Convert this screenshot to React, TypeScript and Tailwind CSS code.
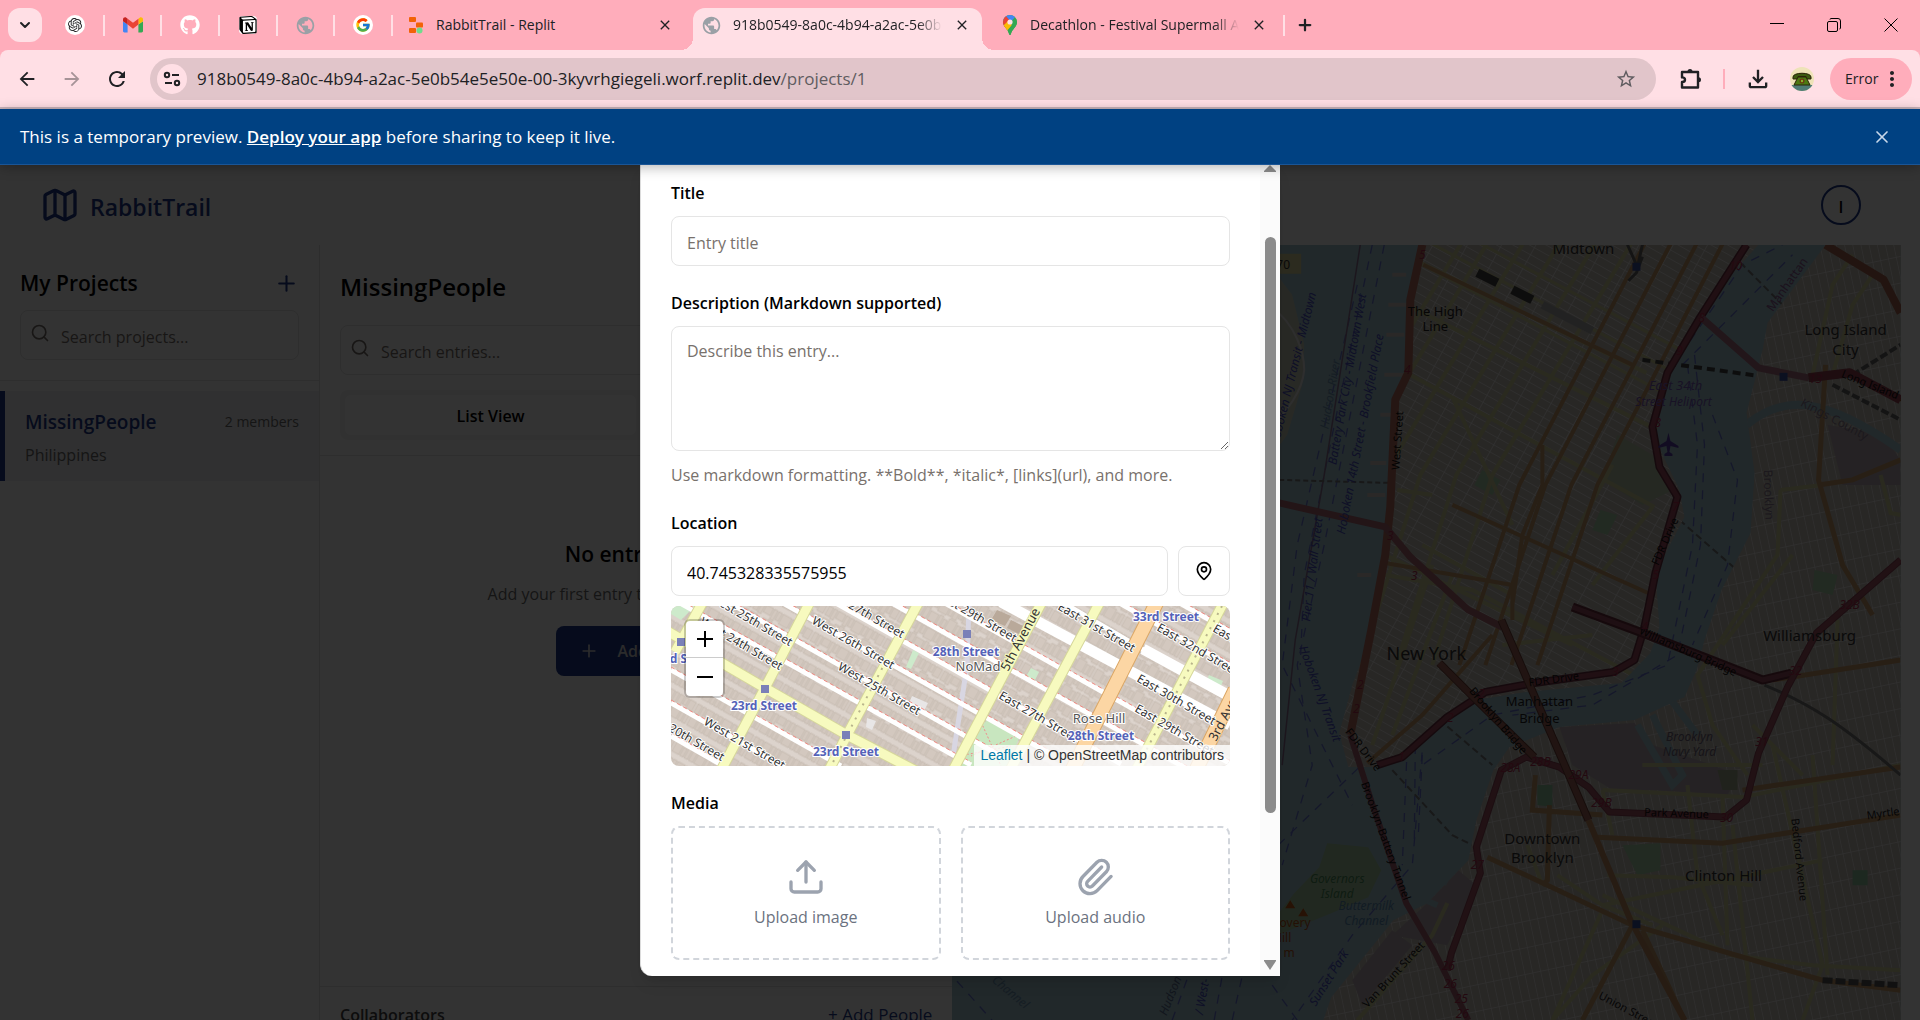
import React from "react";
import { ChevronDown, Map as MapIcon, MapPin, Paperclip, Plus, Search, Upload, X } from "lucide-react";
import {
  MdArrowBack,
  MdArrowForward,
  MdClose,
  MdMoreVert,
  MdOutlineFileDownload,
  MdPublic,
  MdRefresh,
  MdStarBorder,
} from "react-icons/md";
import { FaGithub } from "react-icons/fa";
import { FcGoogle } from "react-icons/fc";
import { SiNotion, SiOpenai } from "react-icons/si";

/* ---------- small brand drawings ---------- */

function GmailLogo() {
  return (
    <svg viewBox="0 0 20 16" className="h-4 w-5" aria-hidden="true">
      <path d="M1.4 15.5h3.2V7.6L0 4.2v9.9c0 .8.6 1.4 1.4 1.4z" fill="#4285f4" />
      <path d="M15.4 15.5h3.2c.8 0 1.4-.6 1.4-1.4V4.2l-4.6 3.4z" fill="#34a853" />
      <path d="M15.4 1.7v5.9L20 4.2V2.4c0-1.7-1.9-2.7-3.3-1.7z" fill="#fbbc04" />
      <path d="M4.6 7.6V1.7L10 5.8l5.4-4.1v5.9L10 11.7z" fill="#ea4335" />
      <path d="M0 2.4v1.8l4.6 3.4V1.7L3.3.7C1.9-.3 0 .7 0 2.4z" fill="#c5221f" />
    </svg>
  );
}

function ReplitLogo() {
  return (
    <svg viewBox="0 0 16 18" className="h-[18px] w-4 shrink-0" aria-hidden="true">
      <rect x="1" y="1" width="7" height="5" rx="1" fill="#f26207" />
      <rect x="8" y="6.500" width="7" height="5" rx="1" fill="#f26207" />
      <rect x="1" y="12" width="7" height="5" rx="1" fill="#f26207" />
      <circle cx="11.500" cy="14.500" r="3" fill="#6fdc8c" />
    </svg>
  );
}

function MapsLogo() {
  return (
    <svg viewBox="0 0 16 22" className="h-[22px] w-4 shrink-0" aria-hidden="true">
      <defs>
        <clipPath id="pin">
          <path d="M8 1a7 7 0 0 0-7 7c0 5 5 7 6.200 12.300.2.900 1.400.9 1.600 0C10 15 15 13 15 8a7 7 0 0 0-7-7z" />
        </clipPath>
      </defs>
      <g clipPath="url(#pin)">
        <rect width="16" height="22" fill="#34a853" />
        <path d="M0 6l8 3 5-6V0H0z" fill="#4285f4" />
        <path d="M0 4l4-2 5 6-6 6H0z" fill="#ea4335" />
        <path d="M0 13l6-6 4 4-6 7H0z" fill="#fbbc04" />
        <path d="M16 3l-6 8-5 7 2 4h9z" fill="#34a853" />
      </g>
      <circle cx="8" cy="8" r="2.600" fill="#ffdfe5" />
    </svg>
  );
}

function SiteInfoIcon() {
  return (
    <svg viewBox="0 0 18 16" className="h-4 w-[18px]" fill="none" stroke="#202124" strokeWidth="2" aria-hidden="true">
      <circle cx="4" cy="4" r="2.200" />
      <path d="M9 4h7M2 12h7" />
      <circle cx="14" cy="12" r="2.200" />
    </svg>
  );
}

function PuzzleIcon() {
  return (
    <svg viewBox="0 0 24 24" className="size-6" aria-hidden="true">
      <path
        d="M3 5h16v15.500H3v-5.500c1.800 0 3-.9 3-2.300S4.800 10.400 3 10.400z"
        fill="none"
        stroke="#202124"
        strokeWidth="2.400"
        strokeLinejoin="round"
      />
      <path d="M8.500 4.500a2.500 2.500 0 0 1 5 0zM19.500 10.200a2.500 2.500 0 0 1 0 5z" fill="#202124" />
    </svg>
  );
}

function ProfilePicture() {
  return (
    <svg viewBox="0 0 24 24" className="size-6" aria-hidden="true">
      <defs>
        <clipPath id="face">
          <circle cx="12" cy="12" r="12" />
        </clipPath>
      </defs>
      <g clipPath="url(#face)">
        <rect width="24" height="24" fill="#eee3b8" />
        <rect y="18" width="24" height="6" fill="#4f7c74" />
        <path d="M3 10c0-5 18-5 18 0v2h-5V9.500H8V12H3z" fill="#3c5a10" stroke="#2a2408" />
        <path d="M8 10h8l4 8H4z" fill="#4d7a12" stroke="#2a2408" />
        <circle cx="12" cy="14" r="2.500" fill="#6b3a12" />
        <circle cx="12" cy="14" r="1.200" fill="#8ab52c" />
      </g>
    </svg>
  );
}

/* ---------- browser chrome ---------- */

function TabStrip() {
  return (
    <header className="flex h-[50px] w-full shrink-0 items-center bg-[#ffadbb] text-[#202124]">
      <button aria-label="Search tabs" className="ml-2 flex size-[34px] shrink-0 items-center justify-center rounded-xl bg-[#ffdfe5]">
        <ChevronDown className="size-4" strokeWidth={3} />
      </button>
      <nav aria-label="Pinned tabs" className="ml-[5px] flex w-[346px] shrink-0 items-center">
        <button aria-label="ChatGPT" className="flex h-[21px] flex-1 items-center justify-center border-r-2 border-[#ffdfe5]">
          <span className="flex size-5 items-center justify-center rounded-full bg-white">
            <SiOpenai className="size-3.5" />
          </span>
        </button>
        <button aria-label="Gmail" className="flex h-[21px] flex-1 items-center justify-center border-r-2 border-[#ffdfe5]">
          <GmailLogo />
        </button>
        <button aria-label="GitHub" className="flex h-[21px] flex-1 items-center justify-center border-r-2 border-[#ffdfe5] text-white">
          <FaGithub className="size-5" />
        </button>
        <button aria-label="Notion" className="flex h-[21px] flex-1 items-center justify-center border-r-2 border-[#ffdfe5]">
          <span className="rounded bg-white">
            <SiNotion className="size-[18px] text-black" />
          </span>
        </button>
        <button aria-label="Preview" className="flex h-[21px] flex-1 items-center justify-center border-r-2 border-[#ffdfe5] text-[#9aa0a6]">
          <MdPublic className="size-[21px]" />
        </button>
        <button aria-label="Google" className="flex h-[21px] flex-1 items-center justify-center border-r-2 border-[#ffdfe5]">
          <span className="flex size-5 items-center justify-center rounded-full bg-white">
            <FcGoogle className="size-4" />
          </span>
        </button>
      </nav>
      <div className="flex w-[300px] shrink-0 items-center pl-[15px] pr-5">
        <ReplitLogo />
        <a href="#replit" className="ml-3 flex-1 overflow-hidden text-sm whitespace-nowrap">RabbitTrail - Replit</a>
        <button aria-label="Close tab"><MdClose className="size-4" /></button>
      </div>
      <div className="relative flex h-[42px] w-[289px] shrink-0 items-center self-end rounded-t-xl bg-[#ffdfe5] pr-3 pb-2 pl-2">
        <span className="absolute bottom-0 -left-3 size-3 bg-[radial-gradient(circle_at_0_0,#ffadbb_12px,#ffdfe5_12px)]" />
        <span className="absolute -right-3 bottom-0 size-3 bg-[radial-gradient(circle_at_100%_0,#ffadbb_12px,#ffdfe5_12px)]" />
        <MdPublic className="size-[21px] shrink-0 text-[#9aa0a6]" />
        <a href="#preview" className="ml-[11px] w-[209px] overflow-hidden text-sm whitespace-nowrap [mask-image:linear-gradient(to_right,black_88%,transparent)]">
          918b0549-8a0c-4b94-a2ac-5e0b54e5e50e
        </a>
        <button aria-label="Close tab" className="ml-auto"><MdClose className="size-4" /></button>
      </div>
      <div className="flex w-[303px] shrink-0 items-center border-[#ffdfe5] pl-5">
        <MapsLogo />
        <a href="#maps" className="ml-3 w-[209px] overflow-hidden text-sm whitespace-nowrap [mask-image:linear-gradient(to_right,black_88%,transparent)]">
          Decathlon - Festival Supermall Alabang
        </a>
        <button aria-label="Close tab" className="ml-auto"><MdClose className="size-4" /></button>
        <span className="ml-4 h-[21px] w-0.5 bg-[#ffdfe5]" />
      </div>
      <button aria-label="New tab" className="ml-[11px]"><Plus className="size-[18px]" strokeWidth={3} /></button>
      <div className="ml-auto flex items-center gap-[43px] pr-[22px]">
        <button aria-label="Minimize">
          <svg viewBox="0 0 14 14" className="size-3.5" stroke="black"><path d="M0 5.500h14" /></svg>
        </button>
        <button aria-label="Restore">
          <svg viewBox="0 0 14 14" className="size-3.5" fill="none" stroke="black">
            <rect x="0.500" y="3.500" width="10" height="10" rx="1.500" />
            <path d="M3 1.500c0-.6.4-1 1-1h7a2.500 2.500 0 0 1 2.500 2.500v7c0 .6-.4 1-1 1" />
          </svg>
        </button>
        <button aria-label="Close window">
          <svg viewBox="0 0 14 14" className="size-3.5" stroke="black"><path d="M.5.5l13 13M13.500.5l-13 13" /></svg>
        </button>
      </div>
    </header>
  );
}

function Toolbar() {
  return (
    <div className="shrink-0 bg-[#ffadbb]">
      <div className="flex h-[59px] items-center rounded-t-lg border-b-2 border-[#c9b3ba] bg-[#ffdfe5] text-[#202124]">
        <button aria-label="Back" className="ml-4"><MdArrowBack className="size-[22px]" /></button>
        <button aria-label="Forward" className="ml-[23px] text-[#202124]/40"><MdArrowForward className="size-[22px]" /></button>
        <button aria-label="Reload" className="ml-[22px]"><MdRefresh className="size-6" /></button>
        <div className="ml-[21px] flex h-[42px] flex-1 items-center rounded-full bg-[#e1c5ca] pr-[19px] pl-[7px]">
          <button aria-label="Site information" className="flex size-[30px] items-center justify-center rounded-full bg-[#ffdfe5]">
            <SiteInfoIcon />
          </button>
          <p className="ml-[10px] flex-1 text-[17px] whitespace-nowrap">
            918b0549-8a0c-4b94-a2ac-5e0b54e5e50e-00-3kyvrhgiegeli.worf.replit.dev<span className="text-[#5f5c60]">/projects/1</span>
          </p>
          <button aria-label="Bookmark" className="text-[#5f5c60]"><MdStarBorder className="size-[22px]" /></button>
        </div>
        <button aria-label="Extensions" className="ml-[23px]"><PuzzleIcon /></button>
        <span className="ml-5 h-5 w-0.5 bg-[#ffadbb]" />
        <button aria-label="Downloads" className="ml-[19px]"><MdOutlineFileDownload className="size-7" /></button>
        <button aria-label="Profile" className="ml-[18px]"><ProfilePicture /></button>
        <button className="mr-2 ml-4 flex h-[42px] w-[82px] items-center rounded-full bg-[#ffadbb] pl-[15px] text-sm">
          Error
          <MdMoreVert className="ml-[2px] size-6" />
        </button>
      </div>
    </div>
  );
}

function PreviewBanner() {
  return (
    <div className="relative z-10 flex h-14 shrink-0 items-center border-b border-[#1a5596] bg-[#004182] px-5 text-[17px] text-white shadow-[0_2px_12px_rgba(0,0,0,0.3)]">
      <p>
        This is a temporary preview.{" "}
        <a href="#deploy" className="font-semibold underline">Deploy your app</a> before sharing to keep it live.
      </p>
      <button aria-label="Dismiss" className="mr-2 ml-auto text-[#c8d8ea]"><X className="size-5" /></button>
    </div>
  );
}

/* ---------- city map behind the dialog ---------- */

type Label = { x: number; y: number; t: string; s: number; f: string; r?: number; i?: boolean };

const CITY_LABELS: Label[] = [
  { x: 631, y: 9, t: "Midtown", s: 15, f: "#333" },
  { x: 483, y: 71, t: "The High", s: 13, f: "#222" },
  { x: 483, y: 86, t: "Line", s: 13, f: "#222" },
  { x: 893, y: 90, t: "Long Island", s: 15, f: "#333" },
  { x: 893, y: 110, t: "City", s: 15, f: "#333" },
  { x: 723, y: 145, t: "East 34th", s: 13, f: "#7a5cb8", i: true },
  { x: 721, y: 161, t: "Street Heliport", s: 12, f: "#7a5cb8", i: true },
  { x: 474, y: 415, t: "New York", s: 18, f: "#333" },
  { x: 587, y: 461, t: "Manhattan", s: 13, f: "#222" },
  { x: 587, y: 478, t: "Bridge", s: 13, f: "#222" },
  { x: 857, y: 396, t: "Williamsburg", s: 15, f: "#333" },
  { x: 737, y: 496, t: "Brooklyn", s: 12, f: "#6f6478", i: true },
  { x: 737, y: 511, t: "Navy Yard", s: 12, f: "#6f6478", i: true },
  { x: 590, y: 599, t: "Downtown", s: 15, f: "#333" },
  { x: 590, y: 618, t: "Brooklyn", s: 15, f: "#333" },
  { x: 771, y: 636, t: "Clinton Hill", s: 15, f: "#333" },
  { x: 385, y: 638, t: "Governors", s: 12, f: "#4a8a5a", i: true },
  { x: 385, y: 653, t: "Island", s: 12, f: "#4a8a5a", i: true },
  { x: 414, y: 665, t: "Buttermilk", s: 12, f: "#5a8ab0", i: true },
  { x: 414, y: 680, t: "Channel", s: 12, f: "#5a8ab0", i: true },
  { x: 340, y: 682, t: "covery", s: 12, f: "#b4541a" },
  { x: 330, y: 697, t: "Hill", s: 12, f: "#b4541a" },
  { x: 332, y: 712, t: "2 m", s: 12, f: "#b4541a" },
  { x: 449, y: 196, t: "West Street", s: 11, f: "#111", r: -86 },
  { x: 345, y: 125, t: "Hoboken NJ Transit - Midtown", s: 12, f: "#4a50c0", r: -76, i: true },
  { x: 382, y: 150, t: "Hudson River", s: 12, f: "#6d93b0", r: -80, i: true },
  { x: 399, y: 135, t: "Battery Park City - Midtown West", s: 12, f: "#4a50c0", r: -80, i: true },
  { x: 412, y: 190, t: "Hoboken 14th Street - Brookfield Place", s: 12, f: "#4a50c0", r: -79, i: true },
  { x: 364, y: 325, t: "Pier 11 / Wall Street", s: 12, f: "#4a50c0", r: -83, i: true },
  { x: 364, y: 450, t: "Hoboken NJ Transit", s: 12, f: "#4a50c0", r: 70, i: true },
  { x: 838, y: 42, t: "Manhattan", s: 12, f: "#8a5a90", r: -55 },
  { x: 812, y: 250, t: "Brooklyn", s: 12, f: "#8a7a90", r: 88 },
  { x: 880, y: 178, t: "Kings County", s: 12, f: "#8a7a90", r: 28 },
  { x: 923, y: 146, t: "Long Island Ex", s: 11, f: "#111", r: 22 },
  { x: 716, y: 298, t: "FDR Drive", s: 11, f: "#111", r: -66 },
  { x: 602, y: 438, t: "FDR Drive", s: 11, f: "#111", r: -8 },
  { x: 408, y: 507, t: "FDR Drive", s: 11, f: "#111", r: 52 },
  { x: 734, y: 410, t: "Williamsburg Bridge", s: 11, f: "#111", r: 24 },
  { x: 543, y: 478, t: "Brooklyn Bridge", s: 11, f: "#111", r: 50 },
  { x: 430, y: 597, t: "Brooklyn-Battery Tunnel", s: 11, f: "#111", r: 70 },
  { x: 724, y: 572, t: "Park Avenue", s: 11, f: "#111", r: 2 },
  { x: 931, y: 572, t: "Myrtle", s: 11, f: "#222", r: -8 },
  { x: 843, y: 615, t: "Bedford Avenue", s: 11, f: "#222", r: 84 },
  { x: 444, y: 732, t: "Van Brunt Street", s: 11, f: "#222", r: -47 },
  { x: 674, y: 768, t: "Union Street", s: 11, f: "#222", r: 28 },
  { x: 380, y: 735, t: "Sunset Park", s: 12, f: "#4a50c0", r: -58, i: true },
  { x: 222, y: 752, t: "Hudson", s: 12, f: "#5a6f90", r: -68, i: true },
  { x: 254, y: 752, t: "/ West-", s: 12, f: "#4a50c0", r: -80, i: true },
  { x: 56, y: 750, t: "Channel", s: 12, f: "#6d93b0", r: 40, i: true },
  { x: 331, y: 24, t: "70", s: 12, f: "#333" },
  { x: 470, y: 14, t: "5", s: 12, f: "#b03050", i: true },
  { x: 783, y: 25, t: "10", s: 12, f: "#b03050", i: true },
  { x: 749, y: 77, t: "8", s: 12, f: "#b03050", i: true },
  { x: 727, y: 110, t: "9", s: 12, f: "#b03050", i: true },
  { x: 705, y: 182, t: "8", s: 12, f: "#b03050", i: true },
  { x: 863, y: 138, t: "13", s: 12, f: "#b03050", i: true },
  { x: 455, y: 129, t: "4", s: 12, f: "#b03050", i: true },
  { x: 438, y: 295, t: "3", s: 12, f: "#b03050", i: true },
  { x: 462, y: 335, t: "3", s: 12, f: "#b03050", i: true },
  { x: 723, y: 266, t: "7", s: 12, f: "#b03050", i: true },
  { x: 703, y: 334, t: "5", s: 12, f: "#b03050", i: true },
  { x: 692, y: 386, t: "4", s: 12, f: "#b03050", i: true },
  { x: 897, y: 364, t: "32B", s: 12, f: "#b03050", i: true },
  { x: 408, y: 444, t: "2", s: 12, f: "#b03050", i: true },
  { x: 404, y: 468, t: "2", s: 12, f: "#b03050", i: true },
  { x: 498, y: 477, t: "2", s: 12, f: "#b03050", i: true },
  { x: 529, y: 453, t: "2", s: 12, f: "#b03050", i: true },
  { x: 449, y: 516, t: "1", s: 12, f: "#b03050", i: true },
  { x: 663, y: 431, t: "3", s: 12, f: "#b03050", i: true },
  { x: 843, y: 430, t: "32", s: 12, f: "#b03050", i: true },
  { x: 809, y: 501, t: "31", s: 12, f: "#b03050", i: true },
  { x: 558, y: 527, t: "28A", s: 12, f: "#b03050", i: true },
  { x: 588, y: 521, t: "28B", s: 12, f: "#b03050", i: true },
  { x: 626, y: 534, t: "29A", s: 12, f: "#b03050", i: true },
  { x: 649, y: 562, t: "29B", s: 12, f: "#b03050", i: true },
  { x: 774, y: 577, t: "30", s: 12, f: "#b03050", i: true },
  { x: 525, y: 624, t: "27", s: 12, f: "#b03050", i: true },
  { x: 496, y: 725, t: "26", s: 12, f: "#b03050", i: true },
  { x: 498, y: 743, t: "26", s: 12, f: "#b03050", i: true },
  { x: 509, y: 758, t: "25", s: 12, f: "#b03050", i: true },
  { x: 510, y: 773, t: "26", s: 12, f: "#b03050", i: true },
];

const LAND_MANHATTAN =
  "M470 0L456 55L454 128L441 155L435 262L433 295L417 395L400 440L387 488L396 522L433 522L470 495L524 455L574 447L669 438L698 408L707 382L703 328L732 272L727 245L703 195L715 122L748 72L777 32L806 0Z";
const LAND_EAST =
  "M873 0L815 78L810 105L794 168L802 228L798 288L769 345L752 395L744 425L732 452L682 475L607 482L557 502L541 525L524 575L516 615L475 658L441 675L379 752L371 775H948V0Z";
const WEST_AVENUES = [460, 486, 522, 558, 594, 630];
const EAST_AVENUES = [662, 688, 714, 740];
const CROSS_STREETS = [12, 38, 64, 92, 120, 150, 180, 212];

function CityMap() {
  return (
    <svg
      viewBox="0 0 948 775"
      preserveAspectRatio="xMidYMid slice"
      className="h-full w-full"
      fontFamily="'Noto Sans', sans-serif"
      role="img"
      aria-label="Map of New York"
    >
      <defs>
        <pattern id="blocksWest" width="30" height="8" patternUnits="userSpaceOnUse" patternTransform="rotate(29)">
          <rect width="30" height="8" fill="#c6c0b8" />
          <path d="M0 0H30M0 0V8" stroke="#f5f4f2" strokeWidth="1.500" fill="none" />
        </pattern>
        <pattern id="blocksEast" width="8" height="26" patternUnits="userSpaceOnUse" patternTransform="rotate(-12)">
          <rect width="8" height="26" fill="#c6c0b8" />
          <path d="M0 0H8M0 0V26" stroke="#f2f0ee" strokeWidth="1.300" fill="none" />
        </pattern>
        <clipPath id="clipWest"><path d={LAND_MANHATTAN} /></clipPath>
        <clipPath id="clipEast"><path d={LAND_EAST} /></clipPath>
      </defs>
      <rect width="948" height="775" fill="#a3c6d3" />

      {/* ferry lanes */}
      <g stroke="#5b62d0" strokeWidth="1.300" fill="none" strokeDasharray="9 8" opacity="0.8">
        <path d="M432 0L396 180L372 300L345 420L360 520L330 620" />
        <path d="M420 0L380 190L352 330L348 420" />
        <path d="M405 40L345 300L330 420L400 560" />
        <path d="M326 600L430 500L470 505L460 620L400 690L340 775" />
        <path d="M455 500L450 620M463 500L462 600M470 510L466 590" />
        <path d="M735 120L745 200L740 300L715 420L640 450L540 470L470 520" />
        <path d="M742 110L752 200L748 300L725 410L640 460L560 470" />
        <path d="M728 110L790 20L830 0M730 120L840 10" />
        <path d="M760 170L785 235L775 320L740 400" />
        <path d="M5 736L40 775M320 740L345 775M220 775L236 731M262 775L270 731M280 775L290 731" />
      </g>
      <path d="M408 0L372 230L343 395L330 520" stroke="#8a6f90" strokeWidth="1.500" fill="none" />
      <path d="M327 235L438 238" stroke="#777" strokeWidth="2" strokeDasharray="5 3" fill="none" />
      <path d="M440 525L500 590L520 600M470 460L540 520M727 275L790 330M780 10L850 80" stroke="#777" strokeWidth="2" strokeDasharray="7 4" fill="none" />

      {/* New Jersey shore */}
      <path d="M317 20L340 50L352 100L350 140L335 190L317 215Z" fill="#c9cdb9" />
      <path d="M317 60C345 80 352 110 352 125C350 150 330 170 317 185" stroke="#e6e6e6" strokeWidth="2" fill="none" />
      <rect x="300" y="9" width="49" height="20" fill="#d9d49a" />

      {/* Manhattan */}
      <path d={LAND_MANHATTAN} fill="url(#blocksWest)" />
      <path d="M440 30h14M436 60h18M434 90h18M432 130h20M428 170h14M418 218h16M415 250h18M405 330h14" stroke="#cfc9c2" strokeWidth="4" />
      <g clipPath="url(#clipWest)" fill="none">
        <path d="M665 190L700 210L720 245L690 260L650 235Z" fill="#b8c9a8" />
        <path d="M530 225L548 235L540 250L522 240Z" fill="#a9d1a9" />
        <path d="M648 265L665 270L655 290L640 285Z" fill="#a9d1a9" />
        <g stroke="#d3d19a" strokeWidth="4">
          {WEST_AVENUES.map((x) => (
            <path key={x} d={`M${x + 60} -20L${x - 90} 230L${x - 150} 420`} />
          ))}
          {CROSS_STREETS.slice(0, 3).map((y) => (
            <path key={y} d={`M440 ${y - 60}L760 ${y + 110}`} strokeWidth="3" />
          ))}
          <path d="M456 12L694 128M454 128L702 262M454 60L715 190M500 152L560 280M640 340L700 262M600 330L660 220" />
          <path d="M445 245L480 250M433 330L520 345L700 440M480 320L420 500M500 330L440 490M550 400L640 390M433 310L620 400M470 300L560 350" />
        </g>
        <g stroke="#c99a68" strokeWidth="4">
          {EAST_AVENUES.map((x) => (
            <path key={x} d={`M${x + 40} -20L${x - 95} 240L${x - 155} 420`} />
          ))}
          <path d="M471 20L680 120M500 260L700 350M433 318L560 340L560 375M590 200L590 240L570 290L560 360M415 518L470 470L540 390" />
        </g>
        <path d="M525 28L545 38M560 45L580 55" stroke="#444" strokeWidth="9" />
        <path d="M590 60L640 86" stroke="#aaa" strokeWidth="8" />
        <path d="M675 0L685 22L690 0M690 12L684 28L676 36" stroke="#666" strokeWidth="3" />
      </g>
      <path d="M690 115L820 133" stroke="#444" strokeWidth="4" strokeDasharray="8 5" fill="none" />

      {/* Queens and Brooklyn */}
      <path d={LAND_EAST} fill="url(#blocksEast)" />
      <g clipPath="url(#clipEast)" fill="none">
        <path d="M607 482L682 478L700 500L760 520L785 530L775 550L700 545L660 545L620 520Z" fill="#b9acb2" />
        <path d="M685 480L720 540L730 530L700 470M715 450L745 490" stroke="#a3c6d3" strokeWidth="7" />
        <path d="M875 180L930 190L948 215V240L890 240Z" fill="#b9acb2" />
        <path d="M794 180C830 150 870 150 948 205" stroke="#a3c6d3" strokeWidth="8" />
        <path d="M475 658L500 620L524 640L495 700L440 690Z" fill="#b9acb2" />
        <path d="M400 735L440 685L460 700L410 760Z" fill="#b9acb2" />
        <path d="M500 545L520 560M490 575L512 588M482 600L505 612M472 625L495 638M462 650L485 660" stroke="#a3c6d3" strokeWidth="6" />
        <path d="M670 600L708 598L708 625L685 630Z" fill="#a9d1a9" />
        <path d="M862 325L885 330L880 350L860 345Z" fill="#a9d1a9" />
        <path d="M585 540L600 540L600 562L585 560Z" fill="#8fc9a0" />
        <path d="M900 625L915 625V640H900Z" fill="#8fc9a0" />
        <path d="M765 525L785 525L785 545L770 545Z" fill="#9fa98a" />
        <g stroke="#d3d19a" strokeWidth="4">
          <path d="M860 130L880 40L900 10M880 130L900 60L920 30M828 245L870 240M828 245L825 310L745 430L760 480L795 530M840 310L770 400" />
          <path d="M650 545L790 552L948 520M690 520L810 520M735 540L745 630L770 690M770 550L775 700M860 510L875 730M820 500L870 720L850 775M650 660L870 615M655 630L720 632L800 640M650 650L780 710L860 720L948 725" />
          <path d="M605 630L650 660L700 680M650 665L600 775M780 580L800 775M495 658L480 690L405 775M928 230L938 268L948 270" />
          <path d="M540 470L560 495M575 600L590 640M650 545L660 590M710 680L640 730L600 775M800 480L850 530M885 375L880 520" />
        </g>
        <g stroke="#c99a68" strokeWidth="5">
          <path d="M873 120L866 235L890 320L920 370M948 215L900 235L866 240M820 435L948 415M790 545L948 522M645 592L770 598L948 570M535 612L680 680L870 735L948 745" />
          <path d="M583 530L580 565L650 570M597 560L595 635L590 640M690 685L732 775M680 680L630 775" />
        </g>
        <path d="M870 735L948 740" stroke="#555" strokeWidth="6" strokeDasharray="10 3" />
        <path d="M812 440C860 460 890 480 948 530" stroke="#777" strokeWidth="3" />
        <path d="M856 135L900 130L948 100M880 140L948 175" stroke="#666" strokeWidth="4" strokeDasharray="8 3" />
      </g>

      {/* Governors Island */}
      <path d="M375 598L416 602L429 625L416 652L379 668L325 690L317 680L342 648L367 622Z" fill="#a7c99f" />
      <path d="M338 655l5 8h-10zM351 663l5 8h-10z" fill="#c05a1a" />

      {/* motorways and bridges */}
      <g fill="none" strokeLinejoin="round">
        <path d="M470 0L458 55L456 128L443 155L438 262L433 310L419 385L408 440L398 490" stroke="#b8705f" strokeWidth="8" />
        <path d="M327 258L433 282L458 312L516 365L550 382" stroke="#ad6a72" strokeWidth="7" />
        <path d="M398 490L421 562L454 658L483 708L516 775" stroke="#a35f70" strokeWidth="6" />
        <path d="M794 0L748 72L715 128L700 182L707 222L725 252L703 328L692 382L682 415L661 427L582 438L533 447L495 472L450 512L425 520" stroke="#6b3040" strokeWidth="8" />
        <path d="M794 0L748 72L715 128L700 182L707 222L725 252L703 328L692 382L682 415L661 427L582 438L533 447L495 472L450 512L425 520" stroke="#a04c5e" strokeWidth="5" />
        <path d="M620 362L690 388L810 435L839 428" stroke="#6b2f3c" strokeWidth="9" />
        <path d="M620 362L690 388L810 435L839 428" stroke="#984e5e" strokeWidth="5" />
        <path d="M948 315L864 388L835 442L806 508L794 555L773 572L657 567L636 542L607 522L574 512L549 525L524 602L528 628L499 708L495 725" stroke="#8a4455" strokeWidth="7" />
        <path d="M948 315L864 388L835 442L806 508L794 555L773 572L657 567L636 542L607 522L574 512L549 525L524 602L528 628L499 708L495 725" stroke="#a65465" strokeWidth="5" />
        <path d="M487 418L524 455L582 512" stroke="#6f4038" strokeWidth="8" />
        <path d="M487 418L524 455L582 512" stroke="#a5655a" strokeWidth="6" />
        <path d="M549 375L607 508L636 575" stroke="#6f4038" strokeWidth="8" />
        <path d="M549 375L607 508L636 575" stroke="#a5655a" strokeWidth="6" />
        <path d="M636 575L678 675L732 775" stroke="#c08a60" strokeWidth="6" />
        <path d="M748 72L806 123L856 133" stroke="#a97080" strokeWidth="7" />
        <path d="M856 133L897 128L948 155" stroke="#94404f" strokeWidth="9" />
        <path d="M873 0L931 35L948 68" stroke="#a9664f" strokeWidth="8" />
      </g>
      <rect x="680" y="18" width="8" height="8" fill="#3a4fa0" />
      <rect x="827" y="128" width="8" height="8" fill="#3a4fa0" />
      <rect x="680" y="675" width="8" height="8" fill="#3a4fa0" />
      <path d="M716 188l2 8 8 5v2l-8-2-1 6 3 2v2h-8v-2l3-2-1-6-8 2v-2l8-5z" fill="#5a3fa8" />

      <g textAnchor="middle">
        {CITY_LABELS.map((l, k) => (
          <text
            key={k}
            x={l.x}
            y={l.y}
            fontSize={l.s}
            fill={l.f}
            fontStyle={l.i ? "italic" : "normal"}
            transform={l.r ? `rotate(${l.r} ${l.x} ${l.y})` : undefined}
          >
            {l.t}
          </text>
        ))}
      </g>
    </svg>
  );
}

/* ---------- location preview map ---------- */

const STREETS = ["M0 -8L300 159", "M0 -36L330 150", "M0 -66L380 148", "M0 -96L450 158", "M0 -127L520 165", "M0 -157L560 158", "M0 -256L560 60", "M0 -290L560 26", "M0 64L170 160", "M0 97L112 160", "M0 130L56 162"];
const STREET_LABELS: { x: number; y: number; t: string; r?: number }[] = [
  { x: 28, y: 18, t: "West 24th Street" },
  { x: 38, y: -6, t: "West 25th Street" },
  { x: 140, y: 17, t: "West 26th Street" },
  { x: 150, y: -14, t: "West 27th Street" },
  { x: 166, y: 63, t: "West 25th Street" },
  { x: 32, y: 118, t: "West 21st Street" },
  { x: -30, y: 109, t: "West 20th Street" },
  { x: 266, y: -8, t: "East 29th Street" },
  { x: 386, y: 3, t: "East 31st Street" },
  { x: 485, y: 24, t: "East 32nd Street" },
  { x: 541, y: 25, t: "East 33rd Street" },
  { x: 327, y: 92, t: "East 27th Street" },
  { x: 465, y: 75, t: "East 30th Street" },
  { x: 463, y: 105, t: "East 29th Street" },
];
const STATIONS: { x: number; y: number; t: string; lx: number; ly: number }[] = [
  { x: 94, y: 83, t: "23rd Street", lx: 93, ly: 104 },
  { x: 175, y: 129, t: "23rd Street", lx: 175, ly: 150 },
  { x: 296, y: 28, t: "28th Street", lx: 295, ly: 50 },
  { x: 10, y: 36, t: "23rd Street", lx: 13, ly: 57 },
];

function LocationMap() {
  return (
    <svg
      viewBox="0 0 559 160"
      preserveAspectRatio="xMidYMid slice"
      className="h-full w-full"
      fontFamily="'Noto Sans', sans-serif"
      role="img"
      aria-label="Selected location"
    >
      <defs>
        <pattern id="lots" width="66" height="30" patternUnits="userSpaceOnUse" patternTransform="translate(0 10) rotate(29.500)">
          <rect width="66" height="30" fill="#dcd3cc" />
          <g fill="#d3c8bf" stroke="#c3b7ac" strokeWidth="0.700">
            <path d="M1 3h5v10h-5zM7 3h4v11h-4zM12 3h8v8h-8zM21 3h4v11h-4zM26 3h4v9h-4zM31 3h10v11h-10zM42 3h4v10h-4zM47 3h5v11h-5zM53 3h4v8h-4zM58 3h7v10h-7z" />
            <path d="M1 16h8v11h-8zM10 18h4v9h-4zM15 16h4v11h-4zM20 15h5v12h-5zM26 17h9v10h-9zM36 16h4v11h-4zM41 18h4v9h-4zM46 15h9v12h-9zM56 17h4v10h-4zM61 16h4v11h-4z" />
          </g>
        </pattern>
      </defs>
      <rect width="559" height="160" fill="url(#lots)" />
      <path d="M0 0H24L10 14L0 8Z" fill="#cdeacb" />
      <path d="M318 112L350 128L336 160H288L300 132Z" fill="#c8e6bf" />
      <path d="M318 112L350 128M310 116L330 160M345 130L300 150M288 150L340 140" stroke="#f08a8a" strokeDasharray="2 2" fill="none" />
      <path d="M242 44l6 3-8 16-5-2z" fill="#cdeacb" />
      <path d="M360 62l8 4-4 8-10-2z" fill="#cdeacb" />
      <path d="M538 69l14 6-2 5-14-6z" fill="#cdeacb" />
      <path d="M326 4l14 6-6 10-14-6zM340 14l14 7-4 8-14-7z" fill="#b9a99a" />
      <path d="M241 90l16 7-4 8-15-8zM196 112l9 3-4 9-6-3z" fill="#e8e6e6" />
      <path d="M298 0L296 60L282 150" stroke="#d8d6e2" strokeWidth="5" fill="none" />
      <g fill="none" stroke="#fff" strokeWidth="5">
        {STREETS.map((d) => <path key={d} d={d} />)}
      </g>
      <g fill="none" stroke="#f4736b" strokeWidth="0.800" strokeDasharray="4 3" transform="translate(0 -3)">
        {STREETS.map((d) => <path key={d} d={d} />)}
      </g>
      <path d="M330 -4L559 119" stroke="#fff" strokeWidth="11" fill="none" />
      <path d="M389 -5L476 46" stroke="#fff" strokeWidth="5" fill="none" />
      <path d="M472 43L562 92" stroke="#fff" strokeWidth="11" fill="none" />
      <g fill="none">
        <path d="M-4 25L94 82L176 129L245 165M34 -8L4 46M141 -8L94 82L48 168M250 -8L176 129L156 168M373 -8L280 168M431 -8L337 168M555 -8L463 168" stroke="#d6d79a" strokeWidth="11" />
        <path d="M-4 25L94 82L176 129L245 165M34 -8L4 46M141 -8L94 82L48 168M250 -8L176 129L156 168M373 -8L280 168M431 -8L337 168M555 -8L463 168" stroke="#f7fabf" strokeWidth="9" />
        <path d="M488 -8L399 168M564 84L523 168" stroke="#dba766" strokeWidth="15" />
        <path d="M488 -8L399 168M564 84L523 168" stroke="#fcd6a4" strokeWidth="13" />
        <path d="M215 55L176 129L158 164M551 0L467 160" stroke="#b8b48c" strokeWidth="2" strokeDasharray="2 6" />
      </g>
      <g fontSize="12" fill="#333" stroke="#fff" strokeWidth="2" paintOrder="stroke">
        {STREET_LABELS.map((l, k) => (
          <text key={k} x={l.x} y={l.y} transform={`rotate(30 ${l.x} ${l.y})`}>{l.t}</text>
        ))}
        <text x="337" y="66" transform="rotate(-62 337 66)" fontSize="13" stroke="#f7fabf">5th Avenue</text>
        <text x="545" y="136" transform="rotate(-62 545 136)" fontSize="13" stroke="#fcd6a4">3rd Avenue</text>
      </g>
      <g fontSize="13" fill="#555" stroke="#fff" strokeWidth="2" paintOrder="stroke" textAnchor="middle">
        <text x="307" y="65">NoMad</text>
        <text x="428" y="117">Rose Hill</text>
      </g>
      <g fontSize="12" fontWeight="700" fill="#5562b8" stroke="#fff" strokeWidth="2" paintOrder="stroke" textAnchor="middle">
        {STATIONS.map((s, k) => (
          <g key={k}>
            <rect x={s.x - 4} y={s.y - 4} width="8" height="8" fill="#7a80b8" stroke="none" />
            <text x={s.lx} y={s.ly}>{s.t}</text>
          </g>
        ))}
        <text x="495" y="15">33rd Street</text>
        <text x="430" y="134">28th Street</text>
      </g>
    </svg>
  );
}

/* ---------- application page ---------- */

function ProjectSidebar() {
  return (
    <aside className="w-80 shrink-0 border-r border-[#e0e0e0]">
      <div className="flex items-center justify-between px-5 pt-6">
        <h2 className="text-[21px] leading-7 font-semibold">My Projects</h2>
        <button aria-label="New project" className="text-[#1e3a8a]"><Plus className="size-[25px]" /></button>
      </div>
      <div className="relative mx-5 mt-[13px]">
        <Search className="absolute top-[13px] left-[10px] size-5 text-[#78716c]" />
        <input aria-label="Search projects" placeholder="Search projects..." className="h-[50px] w-full rounded-lg border border-[#e5e5e5] pt-1 pl-10 text-base placeholder:text-[#78716c]" />
      </div>
      <div className="mt-5 border-t border-[#e5e5e5] pt-[10px]">
        <a href="#missing-people" className="block h-[90px] border-l-[5px] border-[#1e3a8a] bg-[#eeeef2] pt-[17px] pr-5 pl-5">
          <span className="flex items-center justify-between">
            <span className="text-[19px] leading-7 font-semibold text-[#1e3a8a]">MissingPeople</span>
            <span className="text-sm text-[#6b6b6b]">2 members</span>
          </span>
          <span className="mt-[7px] block text-base text-[#6b6b6b]">Philippines</span>
        </a>
      </div>
    </aside>
  );
}

function EntriesPanel() {
  return (
    <section className="flex w-2/5 shrink-0 flex-col">
      <div className="border-b border-[#e5e5e5] px-5 pt-[26px] pb-[15px]">
        <h2 className="text-2xl font-semibold">MissingPeople</h2>
        <div className="relative mt-[22px]">
          <Search className="absolute top-[13px] left-[10px] size-5 text-[#78716c]" />
          <input aria-label="Search entries" placeholder="Search entries..." className="h-[50px] w-full rounded-lg border border-[#e5e5e5] pt-1 pl-10 text-base placeholder:text-[#78716c]" />
        </div>
        <div className="mt-[15px] flex h-[50px] rounded-lg bg-[#f5f5f4] p-[5px] text-base font-semibold">
          <button className="flex-1 rounded-md bg-white pt-0.5">List View</button>
          <button className="flex-1 rounded-md pt-0.5 text-[#78716c]">Timeline</button>
        </div>
      </div>
      <div className="flex flex-1 flex-col items-center pt-[84px]">
        <h3 className="text-[21px] leading-7 font-semibold">No entries yet</h3>
        <p className="mt-[14px] text-base leading-6 text-[#6b6b6b]">Add your first entry to start your project</p>
        <button className="mt-5 flex h-[50px] w-40 items-center justify-center gap-[18px] rounded-lg bg-[#1e3a8a] text-base font-semibold text-[#d8d8d8]">
          <Plus className="size-5" />
          Add Entry
        </button>
      </div>
      <div className="flex h-[34px] items-start justify-between border-t border-[#e5e5e5] px-5 pt-4 text-base leading-6">
        <span className="font-semibold text-[#444]">Collaborators</span>
        <button className="text-[17px] text-[#1e3a8a]">+ Add People</button>
      </div>
    </section>
  );
}

function AppPage() {
  return (
    <div className="flex h-full flex-col bg-white text-black">
      <header className="flex h-20 shrink-0 items-center justify-between pr-[59px] pl-10">
        <h1 className="flex items-center gap-[10px] text-[23px] font-semibold text-[#1e3a8a]">
          <MapIcon className="size-10" />
          <span className="pt-1">RabbitTrail</span>
        </h1>
        <button aria-label="Account" className="flex size-10 items-center justify-center rounded-full border-2 border-[#1e3a8a] pt-1 text-base font-semibold">
          I
        </button>
      </header>
      <div className="flex min-h-0 flex-1 pr-[19px]">
        <ProjectSidebar />
        <div className="flex min-w-0 flex-1">
          <EntriesPanel />
          <div className="min-w-0 flex-1"><CityMap /></div>
        </div>
      </div>
    </div>
  );
}

/* ---------- new entry dialog ---------- */

function EntryDialog() {
  return (
    <div role="dialog" aria-label="New entry" className="flex w-full max-w-[640px] rounded-bl-xl border-l border-[#dcdcdc] bg-white text-black shadow-lg">
      <form className="flex flex-1 flex-col gap-[27px] pt-[18px] pr-[30px] pb-4 pl-[30px]">
        <div>
          <label htmlFor="title" className="block text-base leading-5 font-semibold">Title</label>
          <input id="title" placeholder="Entry title" className="mt-[13px] block h-[50px] w-full rounded-lg border border-[#e5e5e5] px-[15px] pt-1 text-base placeholder:text-[#78716c]" />
        </div>
        <div>
          <label htmlFor="description" className="block text-base leading-5 font-semibold">Description (Markdown supported)</label>
          <textarea id="description" placeholder="Describe this entry..." className="mt-[13px] block h-[125px] w-full rounded-lg border border-[#e5e5e5] px-[15px] py-3 text-base placeholder:text-[#78716c]" />
          <p className="mt-[14px] text-base leading-[21px] text-[#78716c]">
            Use markdown formatting. **Bold**, *italic*, [links](url), and more.
          </p>
        </div>
        <div>
          <label htmlFor="location" className="block text-base leading-5 font-semibold">Location</label>
          <div className="mt-[13px] flex gap-[10px]">
            <input id="location" defaultValue="40.745328335575955" className="h-[50px] min-w-0 flex-1 rounded-lg border border-[#e5e5e5] px-[15px] pt-1 text-base" />
            <button type="button" aria-label="Pick location" className="flex h-[50px] w-[52px] items-center justify-center rounded-lg border border-[#e5e5e5]">
              <MapPin className="size-5" />
            </button>
          </div>
          <div className="relative mt-[10px] h-40 overflow-hidden rounded-lg">
            <LocationMap />
            <div className="absolute top-[13px] left-[13px] flex w-[41px] flex-col rounded-md border-2 border-black/20 bg-white bg-clip-padding">
              <button type="button" aria-label="Zoom in" className="flex h-[37px] items-center justify-center border-b border-[#ccc]">
                <svg viewBox="0 0 16 16" className="size-4" stroke="black" strokeWidth="2"><path d="M0 8h16M8 0v16" /></svg>
              </button>
              <button type="button" aria-label="Zoom out" className="flex h-[38px] items-center justify-center">
                <svg viewBox="0 0 16 16" className="size-4" stroke="black" strokeWidth="2"><path d="M0 8h16" /></svg>
              </button>
            </div>
            <p className="absolute right-0 bottom-0 bg-white/80 px-[6px] font-['Liberation_Sans',sans-serif] text-sm leading-[21px] text-[#333]">
              <a href="#leaflet" className="text-[#0078a8]">Leaflet</a> | © OpenStreetMap contributors
            </p>
          </div>
        </div>
        <div>
          <h3 className="text-base leading-5 font-semibold">Media</h3>
          <div className="mt-[13px] grid grid-cols-2 gap-5">
            <button type="button" className="flex h-[134px] flex-col items-center justify-center rounded-lg border-2 border-dashed border-[#d1d5db] text-[#6b7280]">
              <Upload className="size-10 text-[#9ca3af]" />
              <span className="mt-2 text-base">Upload image</span>
            </button>
            <button type="button" className="flex h-[134px] flex-col items-center justify-center rounded-lg border-2 border-dashed border-[#d1d5db] text-[#6b7280]">
              <Paperclip className="size-10 text-[#9ca3af]" />
              <span className="mt-2 text-base">Upload audio</span>
            </button>
          </div>
        </div>
      </form>
      <div className="flex w-5 flex-col items-center bg-[#fbfbfb]" aria-hidden="true">
        <svg viewBox="0 0 12 8" className="h-2 w-3" fill="#8b8b8b"><path d="M6 0l6 6v1H0V6z" /></svg>
        <div className="mt-16 h-[576px] w-[11px] rounded-full bg-[#8b8b8b]" />
        <svg viewBox="0 0 12 10" className="mt-auto mb-[6px] h-[10px] w-3" fill="#8b8b8b"><path d="M0 0h12v1L6 10L0 1z" /></svg>
      </div>
    </div>
  );
}

export default function App() {
  return (
    <div className="flex h-screen w-full flex-col overflow-hidden font-['Open_Sans',sans-serif]">
      <TabStrip />
      <Toolbar />
      <PreviewBanner />
      <main className="relative min-h-0 flex-1 overflow-hidden">
        <AppPage />
        <div className="absolute inset-0 flex items-start justify-center bg-black/80">
          <EntryDialog />
        </div>
      </main>
    </div>
  );
}
